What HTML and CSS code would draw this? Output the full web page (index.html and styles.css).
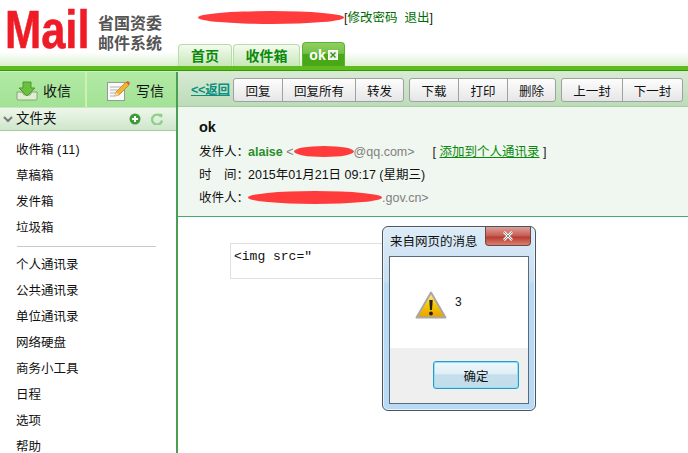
FILE: index.html
```html
<!DOCTYPE html>
<html lang="zh">
<head>
<meta charset="utf-8">
<title>Mail</title>
<link rel="stylesheet" href="styles.css">
</head>
<body>
<header class="top">
  <div class="brand">
    <span class="logo">Mail</span>
    <span class="org">省国资委<br>邮件系统</span>
  </div>
  <div class="top-main">
    <div class="account"><span class="mark mark-user"></span><span class="br">[</span> <a>修改密码</a>&nbsp;&nbsp;<a>退出</a><span class="br">]</span></div>
    <nav class="tabs">
      <span class="tab tab-1">首页</span>
      <span class="tab tab-2">收件箱</span>
      <span class="tab tab-on">ok<svg class="tab-x" width="10" height="10" viewBox="0 0 10 10"><rect x=".5" y=".5" width="9" height="9" fill="#e8f5e0" stroke="#fff"/><path d="M2.5 2.5l5 5M7.5 2.5l-5 5" stroke="#3a8a20" stroke-width="1.4"/></svg></span>
    </nav>
  </div>
</header>
<div class="stripe"></div>
<div class="body">
  <aside class="side">
    <div class="quick">
      <a class="quick-btn q1">
        <svg width="22" height="20" viewBox="0 0 22 20"><path d="M1 11h5l2 3h6l2-3h5v7a1 1 0 0 1-1 1H2a1 1 0 0 1-1-1z" fill="#dff0d0" stroke="#8aa080"/><path d="M7 1h8v6h4l-8 8-8-8h4z" fill="#6cc040" stroke="#4c9a2a"/></svg>
        <span>收信</span>
      </a>
      <a class="quick-btn q2">
        <svg width="24" height="22" viewBox="0 0 24 22"><rect x="1.500" y="2.500" width="17" height="18" fill="#fafafa" stroke="#999"/><path d="M4 7h11M4 10h8M4 13h6M4 16h5" stroke="#b0b0b0"/><path d="M9 16l1-4L20 2l3 3-10 10z" fill="#f2b233" stroke="#b87820" stroke-width=".7"/><path d="M20 2l3 3 1-2-2-2z" fill="#e8503a"/><path d="M9 16l1-4 3 3z" fill="#f4dcb0"/></svg>
        <span>写信</span>
      </a>
    </div>
    <div class="folder-head">
      <svg class="chev" width="10" height="7" viewBox="0 0 10 7"><path d="M1 1l4 4 4-4" fill="none" stroke="#777" stroke-width="2"/></svg>
      <span class="folder-title">文件夹</span>
      <svg class="fh-ic" width="12" height="12" viewBox="0 0 12 12"><circle cx="6" cy="6" r="5.500" fill="#3f9a3a"/><path d="M6 3v6M3 6h6" stroke="#fff" stroke-width="2"/></svg>
      <svg class="fh-ic" width="12" height="12" viewBox="0 0 12 12"><path d="M10 3.500A5 5 0 1 0 11 7.500" fill="none" stroke="#8fd08a" stroke-width="2.400"/><path d="M7.500 0.500l4 .5-.5 4z" fill="#8fd08a"/></svg>
    </div>
    <ul class="menu">
      <li>收件箱 <span class="count">(11)</span></li>
      <li>草稿箱</li>
      <li>发件箱</li>
      <li>垃圾箱</li>
    </ul>
    <hr class="menu-rule">
    <ul class="menu">
      <li>个人通讯录</li>
      <li>公共通讯录</li>
      <li>单位通讯录</li>
      <li>网络硬盘</li>
      <li>商务小工具</li>
      <li>日程</li>
      <li>选项</li>
      <li>帮助</li>
    </ul>
  </aside>
  <main class="main">
    <div class="toolbar">
      <a class="back">&lt;&lt;返回</a>
      <div class="group"><button class="w-48">回复</button><button class="w-73">回复所有</button><button class="w-48">转发</button></div>
      <div class="group"><button class="w-48">下载</button><button class="w-49">打印</button><button class="w-48">删除</button></div>
      <div class="group"><button class="w-60">上一封</button><button class="w-60">下一封</button></div>
    </div>
    <section class="detail">
      <h1>ok</h1>
      <p class="line"><span class="lbl">发件人：</span><b class="sender">alaise</b> <span class="addr">&lt;<span class="mark mark-from"></span>@qq.com&gt;</span><span class="add">[ <a>添加到个人通讯录</a> ]</span></p>
      <p class="line"><span class="lbl">时　间：</span>2015年01月21日 09:17 (星期三)</p>
      <p class="line"><span class="lbl">收件人：</span><span class="addr"><span class="mark mark-to"></span>.gov.cn&gt;</span></p>
    </section>
    <div class="content">
      <div class="mailbox">&lt;img src="</div>
    </div>
  </main>
</div>
<div class="dialog">
  <div class="dlg-title"><span>来自网页的消息</span>
    <span class="dlg-close"><svg width="14" height="10" viewBox="0 0 14 10"><path d="M3 1l8 8M11 1l-8 8" stroke="#fff" stroke-width="2.600"/><path d="M3 1l8 8M11 1l-8 8" stroke="#555" stroke-width=".7"/></svg></span>
  </div>
  <div class="dlg-inner">
    <div class="dlg-msg">
      <svg width="32" height="28" viewBox="0 0 32 28"><defs><linearGradient id="w" x1="0" y1="0" x2="0" y2="1"><stop offset="0" stop-color="#fff2a0"/><stop offset=".5" stop-color="#f6c800"/><stop offset="1" stop-color="#eaa000"/></linearGradient></defs><path d="M16 1.500L30.500 26.500H1.500z" fill="url(#w)" stroke="#a8a8a8" stroke-width="2" stroke-linejoin="round"/><path d="M14.300 9h3.400l-.7 10h-2z" fill="#222"/><circle cx="16" cy="22.500" r="1.900" fill="#222"/></svg>
      <span class="dlg-num">3</span>
    </div>
    <div class="dlg-foot"><button class="dlg-ok">确定</button></div>
  </div>
</div>
<span class="mark mark-dummy"></span>
</body>
</html>
```
FILE: styles.css
```css
* { box-sizing: border-box; }
html, body { margin: 0; height: 453px; overflow: hidden; }
body { font: 13px/1.2 "Liberation Sans", "Noto Sans CJK SC", sans-serif; color: #111; background: #fff; position: relative; }
a { color: inherit; }
ul { list-style: none; margin: 0; padding: 0; }

.top { height: 66px; display: flex; background: linear-gradient(#fff 0, #fff 52px, #dcf0d0 66px); }
.brand { width: 178px; display: flex; padding-left: 5px; }
.logo { display: block; width: 82px; font: bold 53px/60px "Liberation Sans", sans-serif; color: #ef1c27; transform: scaleX(.82); transform-origin: left top; -webkit-text-stroke: .6px #ef1c27; margin-top: 0; }
.org { margin: 12px 0 0 11px; font: bold 16px/20px "Noto Sans CJK SC", sans-serif; color: #555; white-space: nowrap; }
.top-main { flex: 1; display: flex; flex-direction: column; justify-content: space-between; }
.account { padding: 10px 0 0 20px; height: 30px; font-size: 12.500px; color: #006b00; display: flex; align-items: flex-start; white-space: pre; line-height: 16px; }
.br { color: #222; }
.mark { display: inline-block; background: #ff3b3b; border-radius: 50%; }
.mark-user { width: 146px; height: 13px; margin: 1px 0 0; }
.mark-from { width: 60px; height: 11px; vertical-align: -1px; }
.mark-to { width: 134px; height: 13px; vertical-align: -2px; }
.mark-dummy { display: none; }
.tabs { display: flex; align-items: flex-end; gap: 1px; }
.tab { height: 22px; border: 1px solid #b8dca8; border-bottom: 0; border-radius: 4px 4px 0 0; background: linear-gradient(#f4faf0, #c8e8b8); color: #0a8a0a; font-weight: bold; font-size: 14px; line-height: 22px; text-align: center; }
.tab-1 { width: 54px; }
.tab-2 { width: 67px; }
.tab-on { width: 43px; height: 24px; margin-left: 1px; border: 1px solid #5ab52e; border-bottom: 0; background: linear-gradient(#8fd060 0, #76c048 45%, #48a818 50%, #48a818 100%); color: #fff; line-height: 24px; display: flex; align-items: center; justify-content: center; gap: 2px; }
.tab-x { display: block; }
.stripe { height: 6px; background: linear-gradient(#5fbb1e 0, #5fbb1e 4px, #2f9a0a 4px, #2f9a0a 5px, #d4ecc8 5px); }

.body { display: flex; height: 381px; }
.side { width: 178px; border-right: 2px solid #4b9f55; flex: none; overflow: hidden; }
.quick { height: 35px; display: flex; background: linear-gradient(#b2eaa4, #a2e296); }
.quick-btn { display: flex; align-items: center; gap: 5px; font-size: 14px; padding-top: 3px; }
.q1 { width: 87px; padding-left: 16px; border-right: 2px solid #d0f0b0; }
.q2 { padding-left: 19px; gap: 6px; }
.folder-head { height: 24px; display: flex; align-items: center; padding: 0 13px 0 3px; background: linear-gradient(#eef7ea, #cfe6cc); border-top: 1px solid #c8e4c0; border-bottom: 1px solid #a8cc9c; }
.chev { margin-right: 3px; }
.folder-title { flex: 1; font-size: 13.500px; }
.fh-ic { margin-left: 10px; }
.menu { padding-top: 6px; }
.menu li { height: 26px; line-height: 26px; padding-left: 16px; font-size: 12.500px; }
.menu-rule + .menu { padding-top: 0; }
.count { color: #111; letter-spacing: .5px; }
.menu-rule { margin: 5px 20px 5px 17px; border: 0; height: 1px; background: #c8c8c8; }

.main { flex: 1; min-width: 0; }
.toolbar { height: 35px; display: flex; align-items: flex-start; padding: 6px 0 0 13px; background: linear-gradient(#d8ead4, #bcdcb8); border-bottom: 1px solid #a8cca0; overflow: hidden; white-space: nowrap; }
.back { width: 52px; margin-right: 1px; padding-top: 5px; color: #0a8f80; font-size: 12.500px; text-decoration: underline; font-weight: bold; letter-spacing: -.2px; }
.group { display: flex; flex: none; margin-right: 5px; height: 24px; border: 1px solid #a0a0a0; border-radius: 3px; background: linear-gradient(#fdfdfd, #e6e6e6); }
.group button { height: 22px; padding: 0; border: 0; border-left: 1px solid #a0a0a0; background: none; font: 12.500px "Liberation Sans", "Noto Sans CJK SC", sans-serif; color: #111; }
.group button:first-child { border-left: 0; }
.w-48 { width: 48px; }
.w-49 { width: 49px; }
.w-73 { width: 73px; }
.w-60 { width: 60px; }
.detail { height: 110px; padding: 12px 0 0 21px; background: #f0f7f0; border-bottom: 1px solid #4aa878; }
.detail h1 { margin: 0 0 5px; font-size: 14.500px; line-height: 17px; color: #111; }
.line { margin: 0; height: 23px; line-height: 23px; font-size: 12.500px; white-space: nowrap; }
.lbl { display: inline-block; width: 49px; }
.sender { color: #2a8f2a; }
.addr { color: #808080; }
.add { margin-left: 18px; color: #222; }
.add a { color: #0a8a0a; text-decoration: underline; }
.content { padding: 26px 0 0 52px; }
.mailbox { width: 200px; height: 36px; border: 1px solid #e0e0e0; border-width: 1px 0 1px 1px; padding: 5px 0 0 3px; font: 13px/16px "Liberation Mono", monospace; }

.dialog { position: absolute; left: 382px; top: 226px; width: 154px; height: 185px; border: 1px solid #4a5560; border-radius: 6px; padding: 0 6px 6px; background: linear-gradient(#dcebf7 0, #c8dff2 55px, #b8daf6 56px, #b8daf6 100%); box-shadow: inset 0 0 0 1px #e8f2fa; }
.dlg-title { height: 29px; position: relative; padding: 8px 0 0 1px; font-size: 12.500px; color: #111; white-space: nowrap; }
.dlg-close { position: absolute; right: -2px; top: 0; width: 46px; height: 19px; display: flex; align-items: center; justify-content: center; border: 1px solid #6a4a48; border-top: 0; border-radius: 0 0 4px 4px; background: linear-gradient(#dca09a 0, #c85a50 50%, #b83a30 55%, #d88070 100%); }
.dlg-inner { height: 148px; background: #fff; border: 1px solid #5a6a78; display: flex; flex-direction: column; }
.dlg-msg { flex: 1; display: flex; align-items: flex-start; padding: 34px 0 0 25px; }
.dlg-num { margin: 4px 0 0 8px; font-size: 12px; }
.dlg-foot { height: 55px; padding: 13px 9px 0 0; background: #efefef; display: flex; justify-content: flex-end; align-items: flex-start; }
.dlg-ok { width: 86px; height: 28px; border: 1px solid #2a9ac8; border-radius: 3px; padding: 0; background: linear-gradient(#eef7fb 0, #e0eff7 45%, #c4dfec 50%, #c4dcea 100%); box-shadow: inset 0 0 0 1px #8fe0f8; font: 12.500px "Liberation Sans", "Noto Sans CJK SC", sans-serif; color: #111; }
```
